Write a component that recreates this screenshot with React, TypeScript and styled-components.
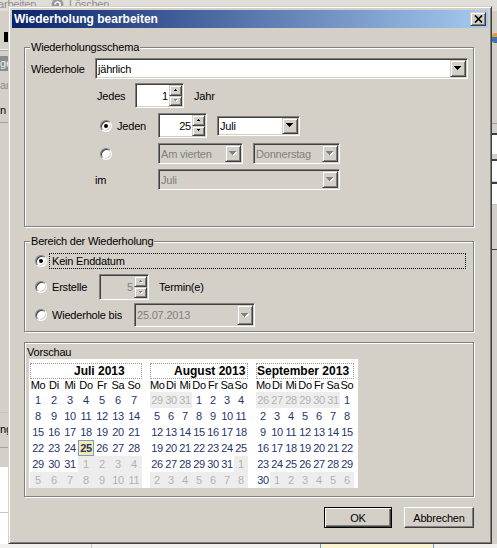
import React from "react";
import styled, { createGlobalStyle, css } from "styled-components";

const FACE = "#d4d0c8";
const SHADOW = "#808080";
const DARK = "#404040";
const GRAYTEXT = "#808080";

const GlobalStyle = createGlobalStyle`
  html, body { margin: 0; padding: 0; }
  body {
    width: 497px;
    height: 548px;
    overflow: hidden;
    background: ${FACE};
    font-family: "Liberation Sans", Arial, sans-serif;
    font-size: 11px;
    letter-spacing: -0.2px;
    color: #000;
  }
  * { box-sizing: border-box; }
`;

const raised = css`
  background: ${FACE};
  border: 1px solid;
  border-color: ${FACE} ${DARK} ${DARK} ${FACE};
  box-shadow: inset 1px 1px 0 #fff, inset -1px -1px 0 ${SHADOW};
`;

const sunken = css`
  border: 1px solid;
  border-color: ${SHADOW} #fff #fff ${SHADOW};
  box-shadow: inset 1px 1px 0 ${DARK}, inset -1px -1px 0 ${FACE};
`;

/* ---------- desktop & background application ---------- */

const Desktop = styled.div`
  position: relative;
  width: 497px;
  height: 548px;
  overflow: hidden;
  background: ${FACE};
`;

const BgApp = styled.div`
  display: flex;
  flex-direction: column;
  height: 100%;
`;

const BgToolbar = styled.div`
  flex: none;
  display: flex;
  align-items: center;
  height: 14px;
  margin-top: -3px;
  background: #e1ded9;
  color: #8e8e8e;
  font-size: 11px;
`;

const BgToolItem = styled.span<{ $w?: number; $ml?: number }>`
  flex: none;
  white-space: nowrap;
  ${(p) => (p.$w ? `width: ${p.$w}px;` : "")}
  margin-left: ${(p) => p.$ml ?? 0}px;
`;

const BgMain = styled.div`
  flex: 1;
  display: flex;
  justify-content: space-between;
`;

const BgLeft = styled.div`
  width: 8px;
  display: flex;
  flex-direction: column;
  overflow: hidden;
`;

const BgRight = styled.div`
  width: 5px;
  display: flex;
  flex-direction: column;
  overflow: hidden;
`;

const BgSpace = styled.div<{ $h: number }>`
  flex: none;
  height: ${(p) => p.$h}px;
`;

const BgLine = styled.div<{ $c: string }>`
  flex: none;
  height: 1px;
  background: ${(p) => p.$c};
`;

const BgText = styled.div<{ $h: number; $c: string; $bg?: string }>`
  flex: none;
  height: ${(p) => p.$h}px;
  line-height: ${(p) => p.$h}px;
  color: ${(p) => p.$c};
  background: ${(p) => p.$bg ?? "transparent"};
  white-space: nowrap;
  font-size: 11px;
`;

const BgMarker = styled.div`
  flex: none;
  height: 10px;
  width: 4px;
  margin-left: 4px;
  background: #000;
`;

const BgWhite = styled.div`
  flex: 1;
  background: #fff;
  display: flex;
  flex-direction: column;
`;

const BgField = styled.div<{ $h: number }>`
  flex: none;
  height: ${(p) => p.$h}px;
  background: #fff;
  border-top: 2px solid ${DARK};
`;

const BgIcon = styled.div`
  flex: none;
  height: 10px;
  width: 5px;
  background: linear-gradient(#e59a3a 0 45%, #3d6fb8 45% 100%);
  border-radius: 3px 0 0 3px;
`;

const BgBottom = styled.div`
  flex: none;
  height: 4px;
  display: flex;
  background: #f2f1ee;
`;

const BgBottomGap = styled.div<{ $w: number }>`
  flex: none;
  width: ${(p) => p.$w}px;
`;

const BgBottomRule = styled.div`
  flex: none;
  width: 1px;
  background: #c8c8c8;
`;

const BgBottomCell = styled.div`
  flex: none;
  width: 114px;
  background: #fbf4d2;
  border-left: 1px solid #6d9fd6;
  border-right: 1px solid #6d9fd6;
`;

/* ---------- dialog window ---------- */

const Dialog = styled.div`
  position: absolute;
  left: 8px;
  top: 6px;
  width: 484px;
  height: 538px;
  display: flex;
  flex-direction: column;
  padding: 3px;
  background: ${FACE};
  border: 1px solid;
  border-color: ${FACE} ${DARK} ${DARK} ${FACE};
  box-shadow: inset 1px 1px 0 #fff, inset -1px -1px 0 ${SHADOW};
`;

const TitleBar = styled.div`
  flex: none;
  height: 18px;
  display: flex;
  align-items: center;
  justify-content: space-between;
  padding: 0 2px;
  background: linear-gradient(to right, #0a246a, #a6caf0);
`;

const TitleText = styled.span`
  color: #fff;
  font-weight: bold;
  font-size: 12px;
  letter-spacing: 0;
  line-height: 18px;
`;

const CloseButton = styled.div`
  ${raised};
  width: 16px;
  height: 14px;
  display: flex;
  align-items: center;
  justify-content: center;
`;

const Body = styled.div`
  flex: 1;
  display: flex;
  flex-direction: column;
  padding: 19px 14px 0 12px;
`;

const Group = styled.section<{ $h: number; $gap: number; $pad: string }>`
  position: relative;
  flex: none;
  height: ${(p) => p.$h}px;
  margin-top: ${(p) => p.$gap}px;
  padding: ${(p) => p.$pad};
  display: flex;
  flex-direction: column;
  border: 1px solid ${SHADOW};
  box-shadow: inset 1px 1px 0 #fff, 1px 1px 0 #fff;
`;

const Caption = styled.span`
  position: absolute;
  top: -7px;
  left: 5px;
  padding: 0 1px;
  line-height: 13px;
  background: ${FACE};
`;

const InnerCaption = styled.div`
  flex: none;
  height: 14px;
  line-height: 14px;
  padding-left: 2px;
`;

const Row = styled.div<{ $top: number; $h: number; $indent?: number }>`
  flex: none;
  display: flex;
  align-items: center;
  margin-top: ${(p) => p.$top}px;
  height: ${(p) => p.$h}px;
  padding-left: ${(p) => p.$indent ?? 0}px;
`;

const Label = styled.span<{ $w?: number; $ml?: number }>`
  flex: none;
  white-space: nowrap;
  ${(p) => (p.$w ? `width: ${p.$w}px;` : "")}
  margin-left: ${(p) => p.$ml ?? 0}px;
`;

const Field = styled.div<{ $w: number; $h: number; $disabled?: boolean; $ml?: number }>`
  ${sunken};
  flex: none;
  display: flex;
  width: ${(p) => p.$w}px;
  height: ${(p) => p.$h}px;
  margin-left: ${(p) => p.$ml ?? 0}px;
  padding: 1px;
  background: ${(p) => (p.$disabled ? FACE : "#fff")};
`;

const FieldText = styled.span<{ $disabled?: boolean; $right?: boolean }>`
  flex: 1;
  display: flex;
  align-items: center;
  justify-content: ${(p) => (p.$right ? "flex-end" : "flex-start")};
  padding: ${(p) => (p.$right ? "0 1px 0 0" : "0 0 0 1px")};
  color: ${(p) => (p.$disabled ? GRAYTEXT : "#000")};
  white-space: nowrap;
  overflow: hidden;
`;

const DropButton = styled.span`
  ${raised};
  flex: none;
  width: 16px;
  display: flex;
  align-items: center;
  justify-content: center;
`;

const SpinColumn = styled.span`
  flex: none;
  width: 13px;
  display: flex;
  flex-direction: column;
`;

const SpinButton = styled.span`
  ${raised};
  flex: 1;
  display: flex;
  align-items: center;
  justify-content: center;
`;

const RadioCircle = styled.span<{ $checked?: boolean }>`
  ${sunken};
  position: relative;
  flex: none;
  width: 12px;
  height: 12px;
  border-radius: 50%;
  background: #fff;
  &::after {
    content: "";
    display: ${(p) => (p.$checked ? "block" : "none")};
    position: absolute;
    left: 3px;
    top: 3px;
    width: 4px;
    height: 4px;
    border-radius: 50%;
    background: #000;
  }
`;

const FocusLabel = styled.span`
  flex: 1;
  height: 16px;
  line-height: 14px;
  margin: 0 7px 0 2px;
  padding-left: 2px;
  border: 1px dotted #000;
  white-space: nowrap;
`;

/* ---------- calendar ---------- */

const Calendar = styled.div`
  flex: none;
  display: flex;
  gap: 8px;
  width: 329px;
  height: 129px;
  margin-left: 4px;
  padding: 4px 0 0 1px;
  background: #fff;
`;

const Month = styled.div<{ $col: number }>`
  flex: none;
  width: ${(p) => p.$col * 7}px;
  display: flex;
  flex-direction: column;
`;

const MonthTitle = styled.div<{ $indent: number }>`
  height: 16px;
  line-height: 14px;
  padding-left: ${(p) => p.$indent}px;
  border: 1px dotted #9c9c9c;
  font-weight: bold;
  font-size: 12px;
  letter-spacing: 0;
  white-space: nowrap;
`;

const DayGrid = styled.div<{ $col: number; $rowH: number }>`
  display: grid;
  grid-template-columns: repeat(7, ${(p) => p.$col}px);
  grid-auto-rows: ${(p) => p.$rowH}px;
`;

const DowCell = styled.span`
  text-align: center;
  line-height: 13px;
  white-space: nowrap;
  letter-spacing: -0.3px;
`;

const DayCell = styled.span<{ $other?: boolean; $today?: boolean }>`
  text-align: center;
  line-height: 16px;
  letter-spacing: -0.3px;
  white-space: nowrap;
  color: ${(p) => (p.$other ? "#b2b2b2" : "#1f356b")};
  background: ${(p) => (p.$other ? "#ededed" : "transparent")};
  ${(p) =>
    p.$today &&
    css`
      background: #f8e9a4;
      border: 1px solid #6d9fd6;
      line-height: 14px;
      font-weight: bold;
      color: #1f356b;
    `}
`;

/* ---------- buttons ---------- */

const ButtonRow = styled.div`
  flex: none;
  display: flex;
  justify-content: flex-end;
  gap: 12px;
  margin-top: 10px;
`;

const PushButton = styled.button<{ $w: number; $default?: boolean }>`
  width: ${(p) => p.$w}px;
  height: 21px;
  padding: 0;
  font: inherit;
  letter-spacing: -0.2px;
  color: #000;
  background: ${FACE};
  border: 1px solid;
  ${(p) =>
    p.$default
      ? css`
          border-color: #000;
          box-shadow: inset 1px 1px 0 #fff, inset -1px -1px 0 ${DARK}, inset -2px -2px 0 ${SHADOW};
        `
      : css`
          border-color: #fff ${DARK} ${DARK} #fff;
          box-shadow: inset -1px -1px 0 ${SHADOW};
        `}
`;

/* ---------- small drawings ---------- */

function Tri({ dir, w, h, disabled }: { dir: "up" | "down"; w: number; h: number; disabled?: boolean }) {
  const pts = dir === "down" ? `0,0 ${w},0 ${w / 2},${h}` : `0,${h} ${w},${h} ${w / 2},0`;
  return (
    <svg width={w + 1} height={h + 1} viewBox={`0 0 ${w + 1} ${h + 1}`} shapeRendering="crispEdges">
      {disabled && <polygon points={pts} transform="translate(1,1)" fill="#fff" />}
      <polygon points={pts} fill={disabled ? SHADOW : "#000"} />
    </svg>
  );
}

function CloseGlyph() {
  return (
    <svg width="9" height="8" viewBox="0 0 9 8">
      <path d="M1 0.5 L8 7.5 M8 0.5 L1 7.5" stroke="#000" strokeWidth="1.6" fill="none" />
    </svg>
  );
}

function DeleteIcon() {
  return (
    <svg width="13" height="13" viewBox="0 0 13 13">
      <circle cx="6.5" cy="6.5" r="6" fill="#9a9a9a" />
      <path d="M4 6.5 A2.6 2.6 0 1 1 6.5 9.1" stroke="#fff" strokeWidth="1.4" fill="none" />
    </svg>
  );
}

/* ---------- composed controls ---------- */

function Combo({ w, h = 21, value, disabled, ml }: { w: number; h?: number; value: string; disabled?: boolean; ml?: number }) {
  return (
    <Field $w={w} $h={h} $disabled={disabled} $ml={ml}>
      <FieldText $disabled={disabled}>{value}</FieldText>
      <DropButton>
        <Tri dir="down" w={7} h={4} disabled={disabled} />
      </DropButton>
    </Field>
  );
}

function Spin({
  w,
  h,
  value,
  disabled,
  downDisabled,
  ml,
}: {
  w: number;
  h: number;
  value: string;
  disabled?: boolean;
  downDisabled?: boolean;
  ml?: number;
}) {
  return (
    <Field $w={w} $h={h} $disabled={disabled} $ml={ml}>
      <FieldText $right $disabled={disabled}>
        {value}
      </FieldText>
      <SpinColumn>
        <SpinButton>
          <Tri dir="up" w={4} h={2} disabled={disabled} />
        </SpinButton>
        <SpinButton>
          <Tri dir="down" w={4} h={2} disabled={disabled || downDisabled} />
        </SpinButton>
      </SpinColumn>
    </Field>
  );
}

type Cell = { day: number; other: boolean; today: boolean };

function buildMonth(year: number, month: number): Cell[] {
  const first = new Date(year, month, 1);
  const offset = (first.getDay() + 6) % 7;
  const cells: Cell[] = [];
  for (let i = 0; i < 42; i++) {
    const d = new Date(year, month, 1 - offset + i);
    const inMonth = d.getMonth() === month;
    cells.push({
      day: d.getDate(),
      other: !inMonth,
      today: inMonth && d.getFullYear() === 2013 && d.getMonth() === 6 && d.getDate() === 25,
    });
  }
  return cells;
}

const DOW = ["Mo", "Di", "Mi", "Do", "Fr", "Sa", "So"];

const MONTHS = [
  { title: "Juli 2013", month: 6, col: 16, indent: 43 },
  { title: "August 2013", month: 7, col: 14, indent: 23 },
  { title: "September 2013", month: 8, col: 14, indent: 0 },
];

function MonthView({ title, month, col, indent }: { title: string; month: number; col: number; indent: number }) {
  const cells = buildMonth(2013, month);
  return (
    <Month $col={col}>
      <MonthTitle $indent={indent}>{title}</MonthTitle>
      <DayGrid $col={col} $rowH={13}>
        {DOW.map((d) => (
          <DowCell key={d}>{d}</DowCell>
        ))}
      </DayGrid>
      <DayGrid $col={col} $rowH={16}>
        {cells.map((c, i) => (
          <DayCell key={i} $other={c.other} $today={c.today}>
            {c.day}
          </DayCell>
        ))}
      </DayGrid>
    </Month>
  );
}

export default function App() {
  return (
    <>
      <GlobalStyle />
      <Desktop>
        <BgApp>
          <BgToolbar>
            <BgToolItem $w={66} $ml={-15}>
              Bearbeiten
            </BgToolItem>
            <DeleteIcon />
            <BgToolItem $ml={5}>Löschen</BgToolItem>
          </BgToolbar>
          <BgMain>
            <BgLeft>
              <BgSpace $h={21} />
              <BgMarker />
              <BgSpace $h={7} />
              <BgLine $c="#f4f4f4" />
              <BgLine $c="#a8a8a8" />
              <BgSpace $h={5} />
              <BgText $h={15} $c="#f0f0f0" $bg="#8c8c8c">
                ge
              </BgText>
              <BgSpace $h={8} />
              <BgText $h={12} $c="#8a8a8a">
                ar
              </BgText>
              <BgSpace $h={13} />
              <BgText $h={12} $c="#000">
                n u
              </BgText>
              <BgSpace $h={6} />
              <BgLine $c="#a0a0a0" />
              <BgSpace $h={289} />
              <BgLine $c="#c4c4c4" />
              <BgSpace $h={10} />
              <BgText $h={12} $c="#000">
                ng
              </BgText>
              <BgSpace $h={12} />
              <BgLine $c="#a0a0a0" />
              <BgSpace $h={19} />
              <BgWhite>
                <BgSpace $h={45} />
                <BgLine $c="#c8c8c8" />
              </BgWhite>
            </BgLeft>
            <BgRight>
              <BgSpace $h={22} />
              <BgIcon />
              <BgSpace $h={80} />
              <BgLine $c="#a0a0a0" />
              <BgSpace $h={9} />
              <BgField $h={21} />
              <BgLine $c="#c8c8c8" />
              <BgSpace $h={4} />
              <BgField $h={22} />
              <BgSpace $h={1} />
              <BgField $h={22} />
              <BgLine $c="#c8c8c8" />
              <BgSpace $h={44} />
              <BgLine $c={DARK} />
            </BgRight>
          </BgMain>
          <BgBottom>
            <BgBottomGap $w={91} />
            <BgBottomRule />
            <BgBottomGap $w={228} />
            <BgBottomCell />
          </BgBottom>
        </BgApp>

        <Dialog>
          <TitleBar>
            <TitleText>Wiederholung bearbeiten</TitleText>
            <CloseButton>
              <CloseGlyph />
            </CloseButton>
          </TitleBar>
          <Body>
            <Group $h={180} $gap={0} $pad="10px 0 0 6px">
              <Caption>Wiederholungsschema</Caption>
              <Row $top={0} $h={21}>
                <Label $w={64}>Wiederhole</Label>
                <Combo w={373} value="jährlich" />
              </Row>
              <Row $top={4} $h={25} $indent={66}>
                <Label $w={38}>Jedes</Label>
                <Spin w={49} h={25} value="1" downDisabled />
                <Label $ml={10}>Jahr</Label>
              </Row>
              <Row $top={5} $h={25} $indent={69}>
                <RadioCircle $checked />
                <Label $w={41} $ml={5}>
                  Jeden
                </Label>
                <Spin w={49} h={25} value="25" />
                <Combo w={83} h={20} value="Juli" ml={10} />
              </Row>
              <Row $top={5} $h={21} $indent={69}>
                <RadioCircle />
                <Combo w={85} value="Am vierten" disabled ml={46} />
                <Combo w={87} value="Donnerstag" disabled ml={10} />
              </Row>
              <Row $top={5} $h={21} $indent={64}>
                <Label $w={63}>im</Label>
                <Combo w={182} value="Juli" disabled />
              </Row>
            </Group>

            <Group $h={91} $gap={14} $pad="11px 0 0 10px">
              <Caption>Bereich der Wiederholung</Caption>
              <Row $top={0} $h={16}>
                <RadioCircle $checked />
                <FocusLabel>Kein Enddatum</FocusLabel>
              </Row>
              <Row $top={5} $h={26}>
                <RadioCircle />
                <Label $w={47} $ml={5}>
                  Erstelle
                </Label>
                <Spin w={50} h={26} value="5" disabled />
                <Label $ml={10}>Termin(e)</Label>
              </Row>
              <Row $top={3} $h={24}>
                <RadioCircle />
                <Label $w={82} $ml={5}>
                  Wiederhole bis
                </Label>
                <Combo w={121} h={24} value="25.07.2013" disabled />
              </Row>
            </Group>

            <Group $h={155} $gap={10} $pad="2px 0 0 0">
              <InnerCaption>Vorschau</InnerCaption>
              <Calendar>
                {MONTHS.map((m) => (
                  <MonthView key={m.title} {...m} />
                ))}
              </Calendar>
            </Group>

            <ButtonRow>
              <PushButton $w={68} $default>
                OK
              </PushButton>
              <PushButton $w={70}>Abbrechen</PushButton>
            </ButtonRow>
          </Body>
        </Dialog>
      </Desktop>
    </>
  );
}
